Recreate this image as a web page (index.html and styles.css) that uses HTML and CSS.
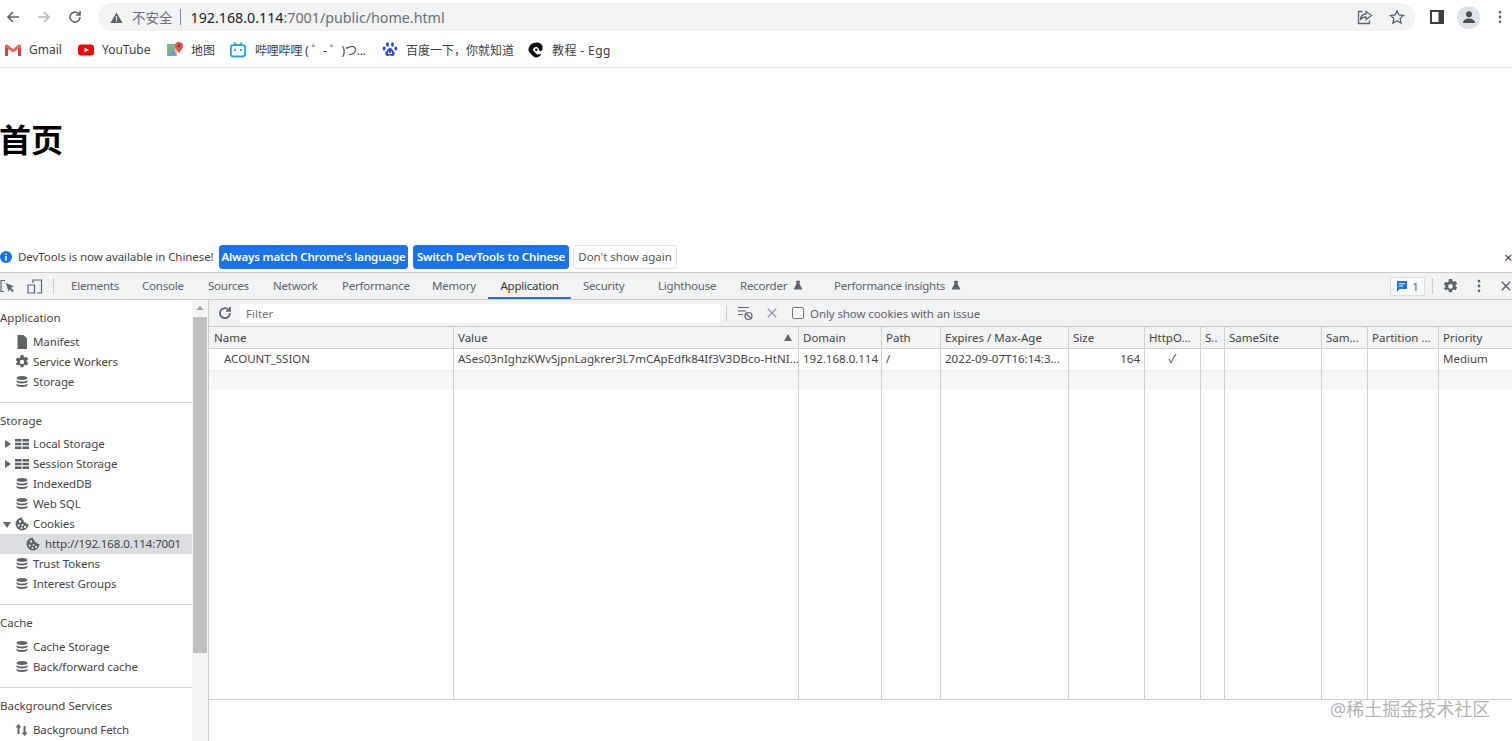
FILE: index.html
```html
<!DOCTYPE html>
<html lang="en">
<head>
<meta charset="utf-8">
<title>首页</title>
<link rel="stylesheet" href="styles.css">
</head>
<body>
<svg class="defs" width="0" height="0">
  <symbol id="db" viewBox="0 0 14 14"><path d="M7 1C3.900 1 1.500 1.900 1.500 3S3.900 5 7 5s5.500-.9 5.500-2S10.100 1 7 1zM1.500 5v1.500c0 1.100 2.400 2 5.500 2s5.500-.9 5.500-2V5c-1 1-3.100 1.500-5.500 1.500S2.500 6 1.500 5zm0 3.500V10c0 1.100 2.400 2 5.500 2s5.500-.9 5.500-2V8.500c-1 1-3.100 1.500-5.500 1.500s-4.500-.5-5.500-1.500z"/></symbol>
  <symbol id="grid" viewBox="0 0 14 14"><path d="M0 2h6.500v2.600H0zM7.500 2H14v2.600H7.500zM0 5.700h6.500v2.600H0zM7.500 5.700H14v2.600H7.500zM0 9.400h6.500V12H0zM7.500 9.400H14V12H7.500z"/></symbol>
  <symbol id="cookie" viewBox="0 0 14 14"><path fill-rule="evenodd" d="M7 .5a6.500 6.500 0 1 0 6.500 6.500c-1.300.2-2.300-.4-2.600-1.500C9.500 5.700 8.300 4.700 8.500 3.200 7.500 3 7 1.800 7 .5zM5 3.200a1.200 1.200 0 1 1 0 2.400 1.200 1.200 0 0 1 0-2.400zM3.700 7.500a1.100 1.100 0 1 1 0 2.200 1.100 1.100 0 0 1 0-2.200zM7.500 7a1 1 0 1 1 0 2 1 1 0 0 1 0-2zM6.500 10a1 1 0 1 1 0 2 1 1 0 0 1 0-2zM10 8.800a1.100 1.100 0 1 1 0 2.200 1.100 1.100 0 0 1 0-2.200z"/></symbol>
  <symbol id="flask" viewBox="0 0 12 12"><path d="M3.500 1h5v1H8v3.200l3 5.300c.2.400 0 .8-.5.800h-9c-.5 0-.7-.4-.5-.8l3-5.300V2h-.5z"/></symbol>
  <symbol id="gear" viewBox="0 0 16 16"><path fill-rule="evenodd" d="M6.300 0h3.400l.4 2.200 1.200.7 2.100-.8 1.700 2.900-1.700 1.400v1.200l1.700 1.400-1.700 2.900-2.100-.8-1.200.7-.4 2.200H6.300l-.4-2.200-1.200-.7-2.100.8L.9 9.800l1.700-1.400V7.200L.9 5.800 2.600 2.900l2.100.8 1.200-.7zM8 5.400a2.500 2.500 0 1 0 0 5 2.500 2.500 0 0 0 0-5z"/></symbol>
  <symbol id="dots" viewBox="0 0 4 16"><circle cx="2" cy="2.500" r="1.600"/><circle cx="2" cy="8" r="1.600"/><circle cx="2" cy="13.500" r="1.600"/></symbol>
</svg>

<header class="browser-bar">
  <div class="nav-btns">
    <svg class="nav-ico" viewBox="0 0 16 16"><path d="M14 8H3M8 3 3 8l5 5"/></svg>
    <svg class="nav-ico nav-off" viewBox="0 0 16 16"><path d="M2 8h11M8 3l5 5-5 5"/></svg>
    <svg class="nav-ico" viewBox="0 0 16 16"><path d="M13 8a5 5 0 1 1-1.500-3.500L13 6M13 2v4H9"/></svg>
  </div>
  <div class="omnibox">
    <svg class="warn-ico" viewBox="0 0 14 14"><path d="M7 1.500 13.500 13H.5z"/><path class="warn-mark" d="M6.400 5.500h1.200v4H6.400zM6.400 10.300h1.200v1.200H6.400z"/></svg>
    <span class="not-secure">不安全</span>
    <span class="omni-sep"></span>
    <span class="url"><b>192.168.0.114</b>:7001/public/home.html</span>
    <span class="spacer"></span>
    <svg class="omni-ico" viewBox="0 0 16 16"><path d="M9 2.500 14.500 6.500 9 10.500V8C6 8 4.500 9 3.500 11 3.500 7.500 5.500 5 9 5zM5.500 2.500h-4v12h11v-3"/></svg>
    <svg class="omni-ico" viewBox="0 0 16 16"><path d="m8 1.800 1.900 4.200 4.600.5-3.400 3.100 1 4.500L8 11.800l-4.100 2.300 1-4.500-3.400-3.100 4.600-.5z"/></svg>
  </div>
  <div class="browser-right">
    <svg class="split-ico" viewBox="0 0 14 14"><path fill-rule="evenodd" d="M0 0h14v14H0zm2 2v10h6.500V2z"/></svg>
    <span class="avatar"><svg viewBox="0 0 14 14"><circle cx="7" cy="4.200" r="3"/><path d="M1 13c0-3 3-4.500 6-4.500s6 1.500 6 4.500z"/></svg></span>
    <svg class="more-ico" viewBox="0 0 4 16"><use href="#dots"/></svg>
  </div>
</header>

<nav class="bookmarks">
  <a class="bm bm-gmail"><svg class="fav" viewBox="0 0 16 16"><path class="m-side" d="M0 3h3v11H0zM13 3h3v11h-3z"/><path class="m-top" d="M0 3l2.500-.5L8 7l5.500-4.500L16 3v2L8 10.500 0 5z"/></svg>Gmail</a>
  <a class="bm bm-yt"><svg class="fav" viewBox="0 0 16 16"><rect y="2.500" width="16" height="11" rx="3" fill="#f00"/><path d="M6.500 5.500 11 8l-4.500 2.500z" fill="#fff"/></svg>YouTube</a>
  <a class="bm bm-map"><svg class="fav" viewBox="0 0 16 16"><path d="M0 2h10v12H0z" fill="#7fb58a"/><path d="M0 14 10 5v9z" fill="#e9d27a"/><path d="M0 14 7 7l3 7z" fill="#6f9fe0"/><path d="M12 0a4 4 0 0 1 4 4c0 2.500-4 7-4 7S8 6.500 8 4a4 4 0 0 1 4-4z" fill="#e2574c"/><circle cx="12" cy="4" r="1.400" fill="#a33"/></svg>地图</a>
  <a class="bm bm-bili"><svg class="fav" viewBox="0 0 16 16"><path d="m4 .5 2.500 2.500M12 .5 9.500 3" fill="none" stroke="#1aa5dc" stroke-width="1.500"/><rect x=".9" y="3.200" width="14.200" height="11.300" rx="2.500" fill="none" stroke="#1aa5dc" stroke-width="1.800"/><path d="M5 7v2M11 7v2" stroke="#1aa5dc" stroke-width="1.800"/></svg>哔哩哔哩 ( ゜- ゜)つ...</a>
  <a class="bm bm-baidu"><svg class="fav" viewBox="0 0 16 16" fill="#2b4fc7"><ellipse cx="5.500" cy="2.500" rx="1.500" ry="2.200"/><ellipse cx="10.500" cy="2.500" rx="1.500" ry="2.200"/><ellipse cx="2.200" cy="6.500" rx="1.500" ry="2"/><ellipse cx="13.800" cy="6.500" rx="1.500" ry="2"/><path fill-rule="evenodd" d="M8 6c2 0 2.500 2 4 3.500 1.500 1.700.5 4.500-1.500 4.500-1 0-1.500-.4-2.500-.4s-1.500.4-2.500.4c-2 0-3-2.800-1.500-4.500C5.500 8 6 6 8 6zM6 9.500v2.500h4V9.500H9v1.500H7V9.500z"/></svg>百度一下，你就知道</a>
  <a class="bm bm-egg"><svg class="fav" viewBox="0 0 16 16"><path d="M8.500.5C4 .5.500 3.800.500 7.500c0 2 1 3 2.500 4.500s3 3.500 5 3.500c2.500 0 4.500-1.500 5-3.500l-4 .5-4-4c-.5-1 .5-3.500 3-3.500 2 0 3 1.500 3 3 0 .5.500 1 1.500 1s2-.8 2-2C15.500 3 12.500.5 8.500.5z" fill="#111"/><circle cx="8.300" cy="7.800" r="1.200" fill="#111"/></svg>教程 - Egg</a>
</nav>

<main class="page">
  <h1>首页</h1>
</main>

<div class="infobar">
  <svg class="info-ico" viewBox="0 0 12 12"><circle cx="6" cy="6" r="6"/><path d="M5.300 2.500h1.400v1.400H5.300zM5.300 5h1.400v4.500H5.300z" fill="#fff"/></svg>
  <span class="info-text">DevTools is now available in Chinese!</span>
  <button class="info-btn btn-match">Always match Chrome's language</button>
  <button class="info-btn btn-switch">Switch DevTools to Chinese</button>
  <button class="info-btn btn-plain">Don't show again</button>
  <span class="spacer"></span>
  <span class="info-close">×</span>
</div>

<section class="devtools">
  <div class="tabbar">
    <svg class="dt-ico ico-inspect" viewBox="0 0 15 15"><path class="thin" d="M5 1.500H1v11h3"/><path d="m6 4 8 3.500-3.200 1.300 3 3-1.400 1.400-3-3L8.500 13z"/></svg>
    <svg class="dt-ico ico-device" viewBox="0 0 16 15"><path class="thin" d="M6 4V1h8.500v13H10M1 6h6.500v8H1z"/></svg>
    <span class="tab-sep"></span>
    <a class="tab t-elements">Elements</a>
    <a class="tab t-console">Console</a>
    <a class="tab t-sources">Sources</a>
    <a class="tab t-network">Network</a>
    <a class="tab t-perf">Performance</a>
    <a class="tab t-memory">Memory</a>
    <a class="tab t-app tab-active">Application</a>
    <a class="tab t-security">Security</a>
    <a class="tab t-light">Lighthouse</a>
    <a class="tab t-recorder">Recorder<svg class="flask" viewBox="0 0 12 12"><use href="#flask"/></svg></a>
    <a class="tab t-insights">Performance insights<svg class="flask" viewBox="0 0 12 12"><use href="#flask"/></svg></a>
    <span class="spacer"></span>
    <span class="issue-badge"><svg viewBox="0 0 12 12"><path d="M1 1h10v8H4L1 11.500z" fill="#1a73e8"/><path d="M3 3.300h6v1H3zM3 5.500h4v1H3z" fill="#fff"/></svg>1</span>
    <span class="tab-sep sep-right"></span>
    <svg class="dt-ico ico-gear" viewBox="0 0 16 16"><use href="#gear"/></svg>
    <svg class="dt-ico ico-dots" viewBox="0 0 4 16"><use href="#dots"/></svg>
    <svg class="dt-ico ico-close" viewBox="0 0 10 10"><path class="thin-close" d="m.8.800 8.400 8.400M9.200.800.800 9.200"/></svg>
  </div>

  <div class="panes">
    <aside class="sidebar">
      <div class="side-list">
        <div class="side-group group-first">
          <div class="side-title">Application</div>
          <div class="side-item"><svg class="si" viewBox="0 0 14 14"><path d="M2.500 0H8.500L12 3.500V14H2.500z"/></svg>Manifest</div>
          <div class="side-item"><svg class="si" viewBox="0 0 16 16"><use href="#gear"/></svg>Service Workers</div>
          <div class="side-item"><svg class="si" viewBox="0 0 14 14"><use href="#db"/></svg>Storage</div>
        </div>
        <div class="side-group">
          <div class="side-title title-short">Storage</div>
          <div class="side-item"><i class="arrow arrow-right"></i><svg class="si" viewBox="0 0 14 14"><use href="#grid"/></svg>Local Storage</div>
          <div class="side-item"><i class="arrow arrow-right"></i><svg class="si" viewBox="0 0 14 14"><use href="#grid"/></svg>Session Storage</div>
          <div class="side-item"><svg class="si" viewBox="0 0 14 14"><use href="#db"/></svg>IndexedDB</div>
          <div class="side-item"><svg class="si" viewBox="0 0 14 14"><use href="#db"/></svg>Web SQL</div>
          <div class="side-item"><i class="arrow arrow-down"></i><svg class="si" viewBox="0 0 14 14"><use href="#cookie"/></svg>Cookies</div>
          <div class="side-item side-sub side-selected"><svg class="si" viewBox="0 0 14 14"><use href="#cookie"/></svg>http://192.168.0.114:7001</div>
          <div class="side-item"><svg class="si" viewBox="0 0 14 14"><use href="#db"/></svg>Trust Tokens</div>
          <div class="side-item"><svg class="si" viewBox="0 0 14 14"><use href="#db"/></svg>Interest Groups</div>
        </div>
        <div class="side-group">
          <div class="side-title">Cache</div>
          <div class="side-item"><svg class="si" viewBox="0 0 14 14"><use href="#db"/></svg>Cache Storage</div>
          <div class="side-item"><svg class="si" viewBox="0 0 14 14"><use href="#db"/></svg>Back/forward cache</div>
        </div>
        <div class="side-group">
          <div class="side-title">Background Services</div>
          <div class="side-item"><svg class="si" viewBox="0 0 14 14"><path d="M3.500 1 6.500 4.500H4.500V11h-2V4.500H.5zM8.500 3h2v6.500h2L9.500 13l-3-3.500h2z"/></svg>Background Fetch</div>
        </div>
      </div>
      <div class="scrollbar">
        <i class="scroll-up"></i>
        <div class="scroll-thumb"></div>
      </div>
    </aside>

    <div class="cookies">
      <div class="filter-bar">
        <svg class="fb-ico ico-refresh" viewBox="0 0 16 16"><path d="M13 8a5 5 0 1 1-1.500-3.500L13 6M13 2v4H9"/></svg>
        <input class="filter-input" type="text" placeholder="Filter">
        <span class="fb-sep"></span>
        <svg class="fb-ico ico-clear" viewBox="0 0 16 16"><path d="M1 2.500h11M1 6h8M1 9.500h5"/><circle cx="11.500" cy="11" r="3.500"/><path d="m9 8.500 5 5"/></svg>
        <svg class="fb-ico ico-x" viewBox="0 0 10 10"><path d="m.8.800 8.400 8.400M9.200.800.800 9.200"/></svg>
        <label class="only-issue"><span class="fake-check"></span>Only show cookies with an issue</label>
      </div>

      <div class="table">
        <div class="row row-head">
          <div class="cell">Name</div>
          <div class="cell cell-sort">Value<i class="sort-up"></i></div>
          <div class="cell">Domain</div>
          <div class="cell">Path</div>
          <div class="cell">Expires / Max-Age</div>
          <div class="cell">Size</div>
          <div class="cell">HttpO...</div>
          <div class="cell">S..</div>
          <div class="cell">SameSite</div>
          <div class="cell">Sam...</div>
          <div class="cell">Partition ...</div>
          <div class="cell">Priority</div>
        </div>
        <div class="row row-data">
          <div class="cell cell-name">ACOUNT_SSION</div>
          <div class="cell">ASes03nIghzKWvSjpnLagkrer3L7mCApEdfk84If3V3DBco-HtNI...</div>
          <div class="cell">192.168.0.114</div>
          <div class="cell">/</div>
          <div class="cell">2022-09-07T16:14:3...</div>
          <div class="cell cell-num">164</div>
          <div class="cell cell-mid">✓</div>
          <div class="cell"></div>
          <div class="cell"></div>
          <div class="cell"></div>
          <div class="cell"></div>
          <div class="cell">Medium</div>
        </div>
        <div class="row row-stripe">
          <div class="cell"></div><div class="cell"></div><div class="cell"></div><div class="cell"></div>
          <div class="cell"></div><div class="cell"></div><div class="cell"></div><div class="cell"></div>
          <div class="cell"></div><div class="cell"></div><div class="cell"></div><div class="cell"></div>
        </div>
        <div class="row row-fill">
          <div class="cell"></div><div class="cell"></div><div class="cell"></div><div class="cell"></div>
          <div class="cell"></div><div class="cell"></div><div class="cell"></div><div class="cell"></div>
          <div class="cell"></div><div class="cell"></div><div class="cell"></div><div class="cell"></div>
        </div>
      </div>
      <div class="preview"></div>
    </div>
  </div>
</section>

<div class="watermark">@稀土掘金技术社区</div>
</body>
</html>
```

FILE: styles.css
```css
*{box-sizing:border-box;}
html,body{height:100%;}
body{
    margin:0;
    height:741px;
    overflow:hidden;
    display:flex;
    flex-direction:column;
    background:#fff;
    font-family:"Noto Sans","Noto Sans CJK SC",sans-serif;
    font-size:11.500px;
    color:#444;
}
.defs{position:absolute;}
.spacer{flex:1;}

/* browser chrome */
.browser-bar{height:34px;display:flex;align-items:center;flex:none;}
.nav-btns{width:98px;display:flex;gap:15px;padding-left:5px;flex:none;}
.nav-ico{width:16px;height:16px;fill:none;stroke:#5f6368;stroke-width:1.600;}
.nav-off{stroke:#b5b7ba;}
.omnibox{
    width:1317px;
    height:28px;
    border-radius:14px;
    background:#f1f3f4;
    display:flex;
    align-items:center;
    padding:0 10px 0 12px;
    flex:none;
}
.warn-ico{width:13px;height:13px;fill:#5f6368;flex:none;}
.warn-mark{fill:#f1f3f4;}
.not-secure{font-size:13.500px;color:#6c6f73;margin-left:9px;}
.omni-sep{width:1px;height:16px;background:#80868b;margin:0 10px 0 7px;}
.url{font-size:14.250px;color:#6c6f73;}
.url b{font-weight:400;color:#222;}
.omni-ico{width:16px;height:16px;fill:none;stroke:#5f6368;stroke-width:1.300;margin-left:16px;}
.browser-right{flex:1;display:flex;align-items:center;padding-left:15px;}
.split-ico{width:14px;height:14px;fill:#3c4043;}
.avatar{
    width:23px;height:23px;border-radius:50%;
    background:#dee1e6;margin-left:13px;
    display:flex;align-items:center;justify-content:center;
}
.avatar svg{width:14px;height:14px;fill:#4a4d51;}
.more-ico{width:4px;height:14px;fill:#5f6368;margin-left:18px;}

.bookmarks{
    height:34px;
    display:flex;
    align-items:center;
    padding:0 0 2px 5px;
    border-bottom:1px solid #e3e3e3;
    flex:none;
}
.bm{display:flex;align-items:center;gap:8px;font-size:12px;color:#3c4043;white-space:nowrap;}
.fav{width:16px;height:16px;flex:none;}
.m-side{fill:#c5483d;}
.m-top{fill:#e8695c;}
.bm-gmail{width:73px;}
.bm-yt{width:89px;}
.bm-map{width:63px;}
.bm-bili{width:152px;gap:9px;letter-spacing:-.2px;}
.bm-baidu{width:146px;}
.bm-egg{letter-spacing:.4px;}

/* page */
.page{height:174px;flex:none;}
.page h1{margin:0 0 0 -1px;padding-top:53px;font-size:32px;line-height:38px;font-weight:700;color:#000;}

/* infobar */
.infobar{height:30px;display:flex;align-items:center;flex:none;}
.info-ico{width:12px;height:12px;fill:#1a73e8;flex:none;}
.info-text{margin-left:6px;padding-bottom:2px;color:#444;white-space:nowrap;width:195px;letter-spacing:-.08px;}
.info-btn{
    height:24px;
    padding:0 0 2px;
    border-radius:3px;
    border:1px solid #1a73e8;
    background:#1a73e8;
    color:#fff;
    font:600 11.500px "Noto Sans",sans-serif;
    white-space:nowrap;
    margin-left:6px;
    letter-spacing:-.15px;
}
.btn-match{width:189px;}
.btn-switch{width:156px;margin-left:5px;}
.btn-plain{width:104px;margin-left:4px;background:#fff;border-color:#e4e4e4;color:#555;font-weight:400;letter-spacing:0;}
.info-close{font-size:15px;color:#444;width:8px;overflow:hidden;}

/* devtools */
.devtools{flex:1;display:flex;flex-direction:column;min-height:0;border-top:1px solid #ccc;}
.tabbar{
    height:27px;
    background:#f1f3f4;
    border-bottom:1px solid #ccc;
    display:flex;
    align-items:center;
    flex:none;
}
.dt-ico{flex:none;fill:#5f6368;}
.thin{fill:none;stroke:#5f6368;stroke-width:1.200;}
.ico-inspect{width:15px;height:15px;}
.ico-device{width:16px;height:15px;margin-left:12px;}
.tab-sep{width:1px;height:16px;background:#ccc;margin-left:10px;flex:none;}
.tab{
    height:26px;
    padding-bottom:2px;
    display:flex;
    align-items:center;
    color:#5f6368;
    white-space:nowrap;
    letter-spacing:-.22px;
    flex:none;
}
.tab-active{color:#333;border-bottom:2px solid #1a73e8;justify-content:center;padding-bottom:0;}
.t-elements{margin-left:17px;width:71px;}
.t-console{width:66px;}
.t-sources{width:65px;}
.t-network{width:69px;}
.t-perf{width:90px;}
.t-memory{width:56px;}
.t-app{width:83px;}
.t-security{width:75px;margin-left:12px;}
.t-light{width:82px;}
.t-recorder{width:94px;}
.t-insights{width:130px;}
.flask{width:10px;height:10px;fill:#5f6368;margin-left:6px;flex:none;}
.issue-badge{
    width:35px;height:19px;margin-right:7px;
    border:1px solid #dadce0;border-radius:2px;background:#f8f9fa;
    display:flex;align-items:center;justify-content:center;gap:4px;
    color:#5f6368;
}
.issue-badge svg{width:12px;height:12px;}
.sep-right{margin-left:0;}
.ico-gear{width:15px;height:15px;margin-left:10px;}
.ico-dots{width:4px;height:14px;margin-left:19px;}
.ico-close{width:10px;height:10px;margin:0 1px 0 20px;}
.thin-close{fill:none;stroke:#5f6368;stroke-width:1.500;}

.panes{flex:1;display:flex;min-height:0;}

/* sidebar */
.sidebar{width:209px;flex:none;display:flex;border-right:1px solid #ccc;overflow:hidden;}
.side-list{width:192px;flex:none;}
.side-group{border-top:1px solid #d6d6d6;padding-bottom:10px;}
.group-first{border-top:0;}
.side-title{height:32px;padding-top:8px;line-height:20px;color:#444;white-space:nowrap;}
.title-short{height:31px;}
.side-item{
    height:20px;
    display:flex;
    align-items:center;
    padding:0 0 2px 33px;
    position:relative;
    color:#444;
    white-space:nowrap;
    letter-spacing:-.1px;
}
.si{width:14px;height:14px;fill:#5f6368;position:absolute;left:15px;top:3px;}
.side-sub{padding-left:45px;}
.side-sub .si{left:26px;}
.side-selected{background:#dadce0;}
.arrow{position:absolute;width:0;height:0;border-style:solid;border-color:transparent;}
.arrow-right{left:5px;top:6px;border-width:4px 0 4px 6px;border-left-color:#666;}
.arrow-down{left:3px;top:8px;border-width:6px 4px 0 4px;border-top-color:#666;}
.scrollbar{width:16px;flex:none;background:#f5f5f5;padding-top:17px;position:relative;}
.scroll-up{
    position:absolute;left:4px;top:6px;width:0;height:0;
    border-style:solid;border-width:0 4px 4px 4px;
    border-color:transparent transparent #a3a3a3 transparent;
}
.scroll-thumb{height:336px;margin:0 1px;background:#c1c1c1;}

/* cookies */
.cookies{flex:1;min-width:0;display:flex;flex-direction:column;}
.filter-bar{
    height:27px;
    background:#f1f3f4;
    border-bottom:1px solid #ccc;
    display:flex;
    align-items:center;
    flex:none;
}
.fb-ico{flex:none;fill:none;stroke:#5f6368;}
.ico-refresh{width:16px;height:16px;stroke-width:1.700;margin-left:8px;}
.filter-input{
    width:480px;height:19px;margin-left:7px;
    border:0;outline:0;background:#fff;padding:0 6px;
    font:11.500px "Noto Sans",sans-serif;
}
.filter-input::placeholder{color:#777;}
.fb-sep{width:1px;height:16px;background:#ccc;margin-left:6px;flex:none;}
.ico-clear{width:16px;height:16px;stroke-width:1.200;margin-left:10px;}
.ico-x{width:10px;height:10px;stroke:#9a9da1;stroke-width:1.400;margin-left:14px;}
.only-issue{display:flex;align-items:center;color:#5f6368;margin-left:15px;white-space:nowrap;letter-spacing:-.1px;}
.fake-check{
    width:12px;height:12px;margin-right:6px;
    border:1px solid #767676;border-radius:2px;background:#fff;
}

.table{flex:1;display:flex;flex-direction:column;min-height:0;border-bottom:1px solid #ccc;}
.row{
    display:grid;
    grid-template-columns:245px 345px 83px 59px 128px 76px 56px 24px 97px 46px 71px 73px;
    flex:none;
}
.cell{
    border-right:1px solid #d0d0d0;
    padding:0 4px;
    white-space:nowrap;
    overflow:hidden;
    position:relative;
    color:#444;
}
.cell:first-child{padding-left:5px;}
.cell:last-child{border-right:0;}
.row-head{height:22px;line-height:22px;background:#f1f3f4;border-bottom:1px solid #d0d0d0;}
.row-data{height:20px;line-height:20px;}
.row-stripe{height:20px;background:#f5f6f7;}
.row-fill{flex:1;}
.cell:first-child.cell-name{padding-left:15px;}
.cell-num{text-align:right;}
.cell-mid{text-align:center;}
.sort-up{
    position:absolute;right:6px;top:7px;width:0;height:0;
    border-style:solid;border-width:0 4.500px 7px 4.500px;
    border-color:transparent transparent #666 transparent;
}
.preview{height:41px;flex:none;}

.watermark{
    position:absolute;
    left:1330px;
    top:696px;
    font-size:18px;
    line-height:26px;
    color:#b4b4b4;
    white-space:nowrap;
}
```
